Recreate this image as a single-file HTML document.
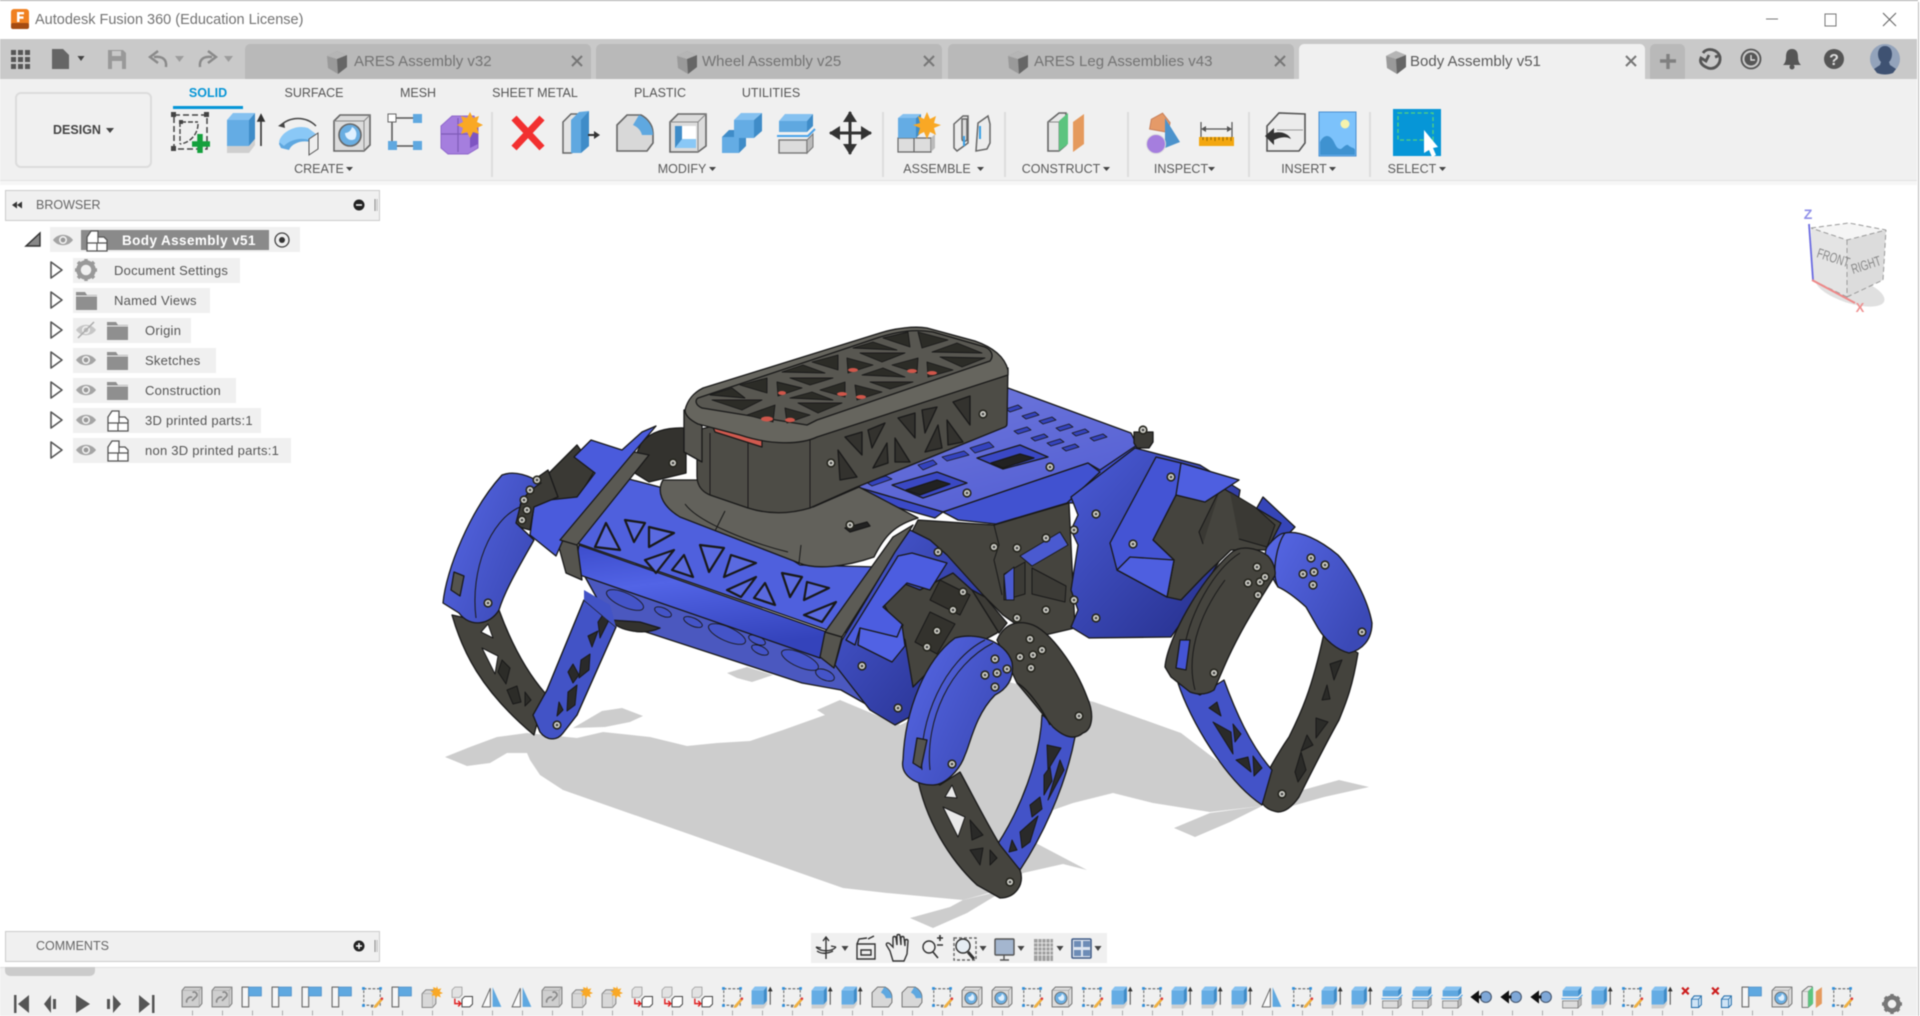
<!DOCTYPE html>
<html lang="en"><head><meta charset="utf-8"><title>Autodesk Fusion 360 (Education License)</title>
<style>
html,body{margin:0;padding:0;background:#fff;width:1920px;height:1016px;overflow:hidden}
#w{position:relative;width:1920px;height:1016px;overflow:hidden;font-family:"Liberation Sans",sans-serif;filter:blur(.45px);background:#fff}
.b,.t{position:absolute}
.t{white-space:nowrap;line-height:1;color:#5c5c5c}
.c{transform:translateX(-50%)}
svg{position:absolute;left:0;top:0}
.tab{position:absolute;top:44px;height:35px;background:#b9b9b9;border-radius:5px 5px 0 0}
.r{position:absolute;background:#f0f0f0;height:25px;left:73px}
.m{font-size:12.5px;color:#555}
.lb{font-size:12.5px;color:#5a5a5a;top:163px}
.tr{font-size:13px;color:#555;letter-spacing:.25px}
.tb{font-size:15px;color:#737373;top:54px}
</style></head><body><div id="w">
<div class="b" style="left:0;top:0;width:1918px;height:1px;background:#aaa"></div>
<div class="b" style="left:0;top:39px;width:1917px;height:40px;background:#c9c9c9"></div>
<div class="b" style="left:0;top:79px;width:1917px;height:101px;background:#f0f0f0"></div>
<div class="b" style="left:0;top:180px;width:1917px;height:5px;background:#f6f6f6;border-top:1px solid #e2e2e2;box-sizing:border-box"></div>
<div class="b" style="left:1918px;top:2px;width:1px;height:1014px;background:#bbb"></div>
<div class="tab" style="left:245px;width:346px"></div>
<div class="tab" style="left:596px;width:346px"></div>
<div class="tab" style="left:948px;width:346px"></div>
<div class="tab" style="left:1299px;width:346px;background:#f0f0f0"></div>
<div class="tab" style="left:1650px;width:35px"></div>
<div class="b" style="left:15px;top:92px;width:137px;height:76px;box-sizing:border-box;background:#f0f0f0;border:2px solid #dcdcdc;border-radius:6px"></div>
<div class="b" style="left:173px;top:106px;width:70px;height:3px;background:#0696d7"></div>
<div class="b" style="left:5px;top:190px;width:375px;height:31px;box-sizing:border-box;background:#f0f0f0;border:1px solid #ccc"></div>
<div class="r" style="left:50px;top:227px;width:250px"></div>
<div class="b" style="left:81px;top:230px;width:188px;height:20px;background:#8a8a8a"></div>
<div class="r" style="top:258px;width:167px"></div>
<div class="r" style="top:288px;width:137px"></div>
<div class="r" style="top:318px;width:118px"></div>
<div class="r" style="top:348px;width:143px"></div>
<div class="r" style="top:378px;width:163px"></div>
<div class="r" style="top:408px;width:188px"></div>
<div class="r" style="top:438px;width:218px"></div>
<div class="b" style="left:5px;top:931px;width:375px;height:31px;box-sizing:border-box;background:#f0f0f0;border:1px solid #ccc"></div>
<div class="b" style="left:811px;top:933px;width:296px;height:30px;background:#f0f0f0"></div>
<div class="b" style="left:0;top:967px;width:1917px;height:49px;background:#f0f0f0;border-top:1px solid #e0e0e0;box-sizing:border-box"></div>
<div class="b" style="left:5px;top:967px;width:90px;height:9px;background:#cbcbcb;border-radius:0 0 5px 5px"></div>
<div class="b" style="left:1393px;top:109px;width:48px;height:47px;background:#0696d7"></div>

<svg width="1920" height="1016" viewBox="0 0 1920 1016">
<defs>
<linearGradient id="pgr" x1="0" y1="0" x2="1" y2="1"><stop offset="0" stop-color="#4b5cd8"/><stop offset="1" stop-color="#232c86"/></linearGradient>
<linearGradient id="tu" x1="0" y1="0" x2=".25" y2="1"><stop offset="0" stop-color="#3c4ccb"/><stop offset=".4" stop-color="#5264e6"/><stop offset="1" stop-color="#3443bb"/></linearGradient>
<linearGradient id="dk" x1="0" y1="0" x2=".6" y2="1"><stop offset="0" stop-color="#7079dc"/><stop offset="1" stop-color="#5560d4"/></linearGradient>
<linearGradient id="bc" x1="0" y1="0" x2="1" y2=".6"><stop offset="0" stop-color="#5768e6"/><stop offset="1" stop-color="#3b49b6"/></linearGradient>
<g id="s"><circle r="4.6" fill="#26261f"/><circle r="3" fill="#cfcfc8"/><circle r="1.3" fill="#444"/></g>
<g id="eye"><path d="M-10 0C-5-7 5-7 10 0 5 7-5 7-10 0z" fill="#a4a4a4"/><circle r="4" fill="#f0f0f0"/><circle r="2.4" fill="#999"/></g>
<g id="fo"><path d="M0 1h9l2 3h10v15H0z" fill="#8f8f8f"/><path d="M0 5h21" stroke="#f0f0f0" stroke-width="1"/></g>
<g id="co"><path d="M1 8l4-6h7v6h6l3 3v11H1z" fill="#fff" stroke="#555" stroke-width="1.3"/><path d="M1 14h20M11 14v8M12 8v6" stroke="#555" stroke-width="1.2" fill="none"/></g>
<path id="tri" d="M0-8L11 0 0 8z" fill="#fff" stroke="#555" stroke-width="1.6" stroke-linejoin="round"/>
<path id="car" d="M-3.5-2h7L0 3z" fill="#444"/>

<g id="ex"><rect x="1" y="8" width="22" height="26" fill="#64ace4"/><polygon points="1,8 7,1 29,1 23,8" fill="#85c1f0"/><polygon points="23,8 29,1 29,27 23,34" fill="#3f8cc8"/><polygon points="1,34 23,34 29,27 29,33 23,41 1,41" fill="#cfcfcf"/><path d="M35 34V5M32 9l3-6 3 6z" stroke="#333" stroke-width="1.6" fill="#333"/></g>
<g id="fi"><path d="M2 38V12L12 2h14c6 3 12 10 12 18v10l-6 8z" fill="#d8d8d8" stroke="#666" stroke-width="1.6"/><path d="M24 2c8 3 14 11 14 20H27c-1-4-4-8-9-10z" fill="#5fa8e0"/></g>
<g id="ho"><path d="M2 8l6-6h30v30l-6 6H2z" fill="#dcdcdc" stroke="#666" stroke-width="1.6"/><path d="M2 8h30v30M32 8l6-6" fill="none" stroke="#888"/><circle cx="18" cy="22" r="11" fill="#6aaee2" stroke="#666" stroke-width="1.6"/><path d="M13 20c3 0 6-2 7-6 4 2 6 7 3 12-5 3-10-1-10-6z" fill="#dff0ff"/></g>
<g id="fl"><rect x="2" y="2" width="12" height="36" fill="#f6f6f6" stroke="#666" stroke-width="2"/><rect x="14" y="2" width="23" height="16" fill="#5fa8e0" stroke="#4a8ec8" stroke-width="1.5"/></g>
<g id="sk"><rect x="5" y="5" width="30" height="30" fill="none" stroke="#555" stroke-width="1.6" stroke-dasharray="5 3"/><rect x="2" y="2" width="5" height="5" fill="#2f8fdc"/><rect x="33" y="2" width="5" height="5" fill="#2f8fdc"/><rect x="2" y="33" width="5" height="5" fill="#2f8fdc"/><rect x="18" y="35" width="4" height="4" fill="#777"/><path d="M24 36l12-14 4 3-12 14-5 1z" fill="#f0b040"/><circle cx="38" cy="23" r="2.4" fill="#e03a3a"/></g>
<g id="ln"><path d="M2 8l5-6h31v30l-5 6H2z" fill="#cfcfcf" stroke="#777" stroke-width="1.8"/><path d="M2 8h31v30M33 8l5-6" fill="none" stroke="#999"/><path d="M11 30c-4-4 6-13 9-9M21 12c4-4 11 3 7 7l-8 8" fill="none" stroke="#888" stroke-width="3"/></g>
<g id="ns"><path d="M2 14l7-7h18v25l-6 7H2z" fill="#d8d8d8" stroke="#777" stroke-width="1.6"/><path d="M2 14h19v25" fill="none" stroke="#aaa"/><path d="M29 0l2 6 6-2-3 6 6 3-6 2 2 6-6-3-3 5-2-6-6 1 3-5-5-4 6-1-1-6 6 2z" fill="#f9a825"/></g>
<g id="cp"><path d="M2 7l5-5h13v14l-5 5H2z" fill="#e2e2e2" stroke="#999" stroke-width="1.4"/><path d="M20 24l5-5h14v14l-5 5H20z" fill="#fff" stroke="#444" stroke-width="1.8"/><path d="M7 23v9h10M13 27l5 5-5 5" fill="none" stroke="#e02020" stroke-width="2.6"/></g>
<g id="mi"><path d="M17 4L2 38h15z" fill="#fafafa" stroke="#666" stroke-width="1.8"/><path d="M21 2l16 36H21z" fill="#5fa8e0"/></g>
<g id="of"><polygon points="3,8 9,1 37,1 31,8" fill="#85c1f0"/><rect x="3" y="8" width="28" height="11" fill="#5fa8e0"/><polygon points="31,8 37,1 37,13 31,19" fill="#3f8cc8"/><path d="M1 23h31l7-7" fill="none" stroke="#4aa3ea" stroke-width="2"/><rect x="3" y="27" width="28" height="13" fill="#dcdcdc" stroke="#777" stroke-width="1.4"/><path d="M31 27l6-6v13l-6 6z" fill="#bbb" stroke="#777"/></g>
<g id="jn"><circle cx="27" cy="20" r="10" fill="#7fa8d8" stroke="#44566e" stroke-width="2"/><path d="M19 20H9M12 13l-9 7 9 7z" stroke="#111" stroke-width="5" fill="#111"/></g>
<g id="rm"><path d="M2 3l12 12M14 3L2 15" stroke="#cc1f1f" stroke-width="4"/><path d="M19 24l5-6h13v16l-5 5H19z" fill="#cfe4f6" stroke="#1f6aa8" stroke-width="1.8"/><path d="M19 24h13v15M32 24l5-6" fill="none" stroke="#1f6aa8" stroke-width="1.4"/></g>
<g id="cpl"><path d="M2 38V10L13 1h7v32l-7 6H2z" fill="#e8e8e8" stroke="#666" stroke-width="1.6"/><path d="M2 10h11v29" fill="none" stroke="#888"/><path d="M13 9L22 1v31l-9 7z" fill="#5cc47f"/><path d="M27 10l11-8v30l-11 8z" fill="#e59a5d"/></g>
<g id="tln"><use href="#ln" transform="scale(.55)"/></g><g id="tfl"><use href="#fl" transform="scale(.55)"/></g><g id="tsk"><use href="#sk" transform="scale(.55)"/></g><g id="tns"><use href="#ns" transform="scale(.55)"/></g><g id="tcp"><use href="#cp" transform="scale(.55)"/></g><g id="tmi"><use href="#mi" transform="scale(.55)"/></g><g id="tex"><use href="#ex" transform="scale(.55)"/></g><g id="tfi"><use href="#fi" transform="scale(.55)"/></g><g id="tho"><use href="#ho" transform="scale(.55)"/></g><g id="tof"><use href="#of" transform="scale(.55)"/></g><g id="tjn"><use href="#jn" transform="scale(.55)"/></g><g id="trm"><use href="#rm" transform="scale(.55)"/></g><g id="tcpl"><use href="#cpl" transform="scale(.55)"/></g>
<g id="cube"><polygon points="0,6 10,1 20,5 20,17 11,24 1,18" fill="#9a9a9a"/><polygon points="10,9 20,5 20,17 11,24" fill="#666"/><polygon points="0,6 10,1 20,5 10,9" fill="#b5b5b5"/></g>
<g id="x"><path d="M-5-5L5 5M5-5L-5 5" stroke="#777" stroke-width="2"/></g>
</defs>

<!-- title / tab bar -->
<rect x="11" y="9" width="18" height="20" rx="3" fill="#f08020"/><rect x="11" y="23" width="18" height="6" rx="2" fill="#a54c12"/><path d="M17 12h7v2.4h-4.5v2h4v2.300h-4V22H17z" fill="#fff"/>
<path d="M1766 19h12" stroke="#777"/><rect x="1825" y="14" width="11" height="12" fill="none" stroke="#777"/><path d="M1883 13l13 13M1896 13l-13 13" stroke="#666" stroke-width="1.100"/>
<g fill="#555"><rect x="11" y="50" width="5" height="5"/><rect x="18" y="50" width="5" height="5"/><rect x="25" y="50" width="5" height="5"/><rect x="11" y="57" width="5" height="5"/><rect x="18" y="57" width="5" height="5"/><rect x="25" y="57" width="5" height="5"/><rect x="11" y="64" width="5" height="5"/><rect x="18" y="64" width="5" height="5"/><rect x="25" y="64" width="5" height="5"/></g>
<path d="M52 49h11l6 6v14H52z" fill="#666"/><use href="#car" x="81" y="58" fill="#555"/>
<path d="M108 50h15l3 3v16h-18z" fill="#999"/><rect x="112" y="51" width="9" height="5" fill="#c9c9c9"/><rect x="112" y="61" width="10" height="8" fill="#c9c9c9"/>
<path d="M166 67c1-8-4-11-12-10M158 51l-8 6 8 6" fill="none" stroke="#8a8a8a" stroke-width="2.400"/><path d="M175 56h9l-4.500 6z" fill="#9c9c9c"/>
<path d="M200 67c-1-8 4-11 12-10M208 51l8 6-8 6" fill="none" stroke="#8a8a8a" stroke-width="2.400"/><path d="M224 56h9l-4.500 6z" fill="#9c9c9c"/>
<use href="#cube" x="327" y="50"/><use href="#x" x="577" y="61"/>
<use href="#cube" x="677" y="50"/><use href="#x" x="929" y="61"/>
<use href="#cube" x="1008" y="50"/><use href="#x" x="1280" y="61"/>
<use href="#cube" x="1386" y="50"/><use href="#x" x="1631" y="61"/>
<path d="M1668 54v15M1660 61h16" stroke="#808080" stroke-width="3.400"/>
<path d="M1703 53c4-6 15-4 17 4 1 8-6 13-12 11-5-2-9-5-7-10l5 3 3-6M1715 57l3-1" fill="none" stroke="#555" stroke-width="2.800"/>
<circle cx="1751" cy="59" r="9.500" fill="none" stroke="#555" stroke-width="1.800"/><circle cx="1751" cy="59" r="6.500" fill="#555"/><path d="M1751 55v5h4" stroke="#ddd" fill="none" stroke-width="1.400"/>
<path d="M1792 49c5 0 6 4 6 8 0 4 1 6 3 8h-18c2-2 3-4 3-8 0-4 1-8 6-8z" fill="#555"/><circle cx="1792" cy="67" r="2.500" fill="#555"/>
<circle cx="1834" cy="59" r="10" fill="#555"/><text x="1834" y="65" text-anchor="middle" font-family="Liberation Sans" font-weight="bold" font-size="16" fill="#ddd">?</text>
<circle cx="1885" cy="59" r="15" fill="#93a3bb"/><path d="M1885 46c5 0 7 4 7 8 0 3-1 6-3 8l1 3 6 4-3 4c-5 2-11 2-16 0l-3-4 6-4 1-3c-2-2-3-5-3-8 0-4 2-8 7-8z" fill="#3f5272"/>

<!-- design caret etc -->
<path d="M106 128h8l-4 5z" fill="#444"/>
<path d="M492 112v65M883 112v65M1005 112v65M1128 112v65M1249 112v65M1370 112v65" stroke="#ddd" stroke-width="2"/>
<g fill="#444"><path d="M346 167h7l-3.500 4z"/><path d="M709 167h7l-3.500 4z"/><path d="M977 167h7l-3.500 4z"/><path d="M1103 167h7l-3.500 4z"/><path d="M1208 167h7l-3.500 4z"/><path d="M1329 167h7l-3.500 4z"/><path d="M1439 167h7l-3.500 4z"/></g>

<!-- toolbar icons -->
<g transform="translate(171,112)"><rect x="3" y="3" width="33" height="34" fill="none" stroke="#444" stroke-width="1.500" stroke-dasharray="6 3"/><path d="M10 10h17M9 10v22M27 12c0 10-8 19-18 20" fill="none" stroke="#444" stroke-width="1.400" stroke-dasharray="5 2"/><g fill="#444"><rect y="0" width="5" height="5"/><rect x="33" width="5" height="5"/><rect y="34" width="5" height="5"/><rect x="8" y="8" width="4" height="4"/></g><path d="M29 22v19M21 32h18" stroke="#14a03c" stroke-width="5.500"/></g>
<use href="#ex" transform="translate(226,112)"/>
<g transform="translate(278,112)"><path d="M2 14c10-10 26-10 36 0" fill="none" stroke="#444" stroke-width="1.500"/><path d="M0 14l6-4 1 6z" fill="#444"/><path d="M1 32C3 22 18 15 30 18l2 12c-8-2-18 1-21 8L3 36z" fill="#5fa8e0"/><path d="M1 30C3 20 18 12 30 16l8 6-7 6c-8-3-20 0-25 6z" fill="#8ac8f6"/><path d="M31 27l9-6v16l-9 6z" fill="#eee" stroke="#555"/></g>
<use href="#ho" transform="translate(332,113)"/>
<g transform="translate(386,112)"><path d="M8 6h20M6 10v20M10 34h20" stroke="#555" stroke-width="1.500"/><rect x="2" y="2" width="8" height="8" fill="#fff" stroke="#666"/><rect x="27" y="2" width="9" height="9" fill="#5fa8e0"/><rect x="2" y="29" width="9" height="9" fill="#5fa8e0"/><rect x="27" y="29" width="9" height="9" fill="#5fa8e0"/></g>
<g transform="translate(440,112)"><path d="M1 14L12 4h22l4 10v22l-10 6H8l-7-6z" fill="#a57ede" stroke="#9068cc"/><path d="M1 22h36M18 6v34" stroke="#7f5bb8" stroke-width="1.200"/><path d="M30 36V14l8-2v20z" fill="#7e55c2"/><path d="M30 0l3 6 6-2-2 6 6 3-6 3 2 6-6-2-3 6-3-6-6 2 2-6-6-3 6-3-2-6 6 2z" fill="#f9a825"/></g>
<path d="M514 118l28 30M542 118l-28 30" stroke="#f23030" stroke-width="7"/>
<g transform="translate(562,112)"><path d="M1 10l8-8h8v36l-8 3H1z" fill="#e4e4e4" stroke="#666" stroke-width="1.500"/><polygon points="9,8 17,0 27,-1 27,34 19,41 9,41" fill="#5fa8e0"/><polygon points="19,8 27,-1 27,34 19,41" fill="#3f8cc8"/><path d="M26 23h8" stroke="#333" stroke-width="2"/><path d="M32 19l6 4-6 4z" fill="#333"/></g>
<use href="#fi" transform="translate(615,113)"/>
<g transform="translate(668,112)"><path d="M2 10l8-8h28v32l-8 6H2z" fill="#dcdcdc" stroke="#666" stroke-width="1.600"/><path d="M2 10h28v30M30 10l8-8" fill="none" stroke="#888"/><path d="M7 14h21v22H7z" fill="#3f8cc8"/><path d="M14 14h14v14H14z" fill="#fff"/><path d="M14 27h14v9H7z" fill="#8ac8f6"/></g>
<polygon points="722,137 729,130 746,130 746,146 739,153 722,153" fill="#3f8cc8"/><rect x="722" y="137" width="17" height="16" fill="#64ace4"/><polygon points="734,120 741,113 762,113 754,120" fill="#85c1f0"/><rect x="734" y="120" width="20" height="18" fill="#64ace4"/><polygon points="754,120 762,113 762,131 754,138" fill="#3f8cc8"/>
<g transform="translate(776,113)"><use href="#of"/></g>
<path d="M850 112v42M830 133h41" stroke="#333" stroke-width="3"/><path d="M850 111l-7 11h14zM850 155l-7-11h14zM829 133l11-7v14zM872 133l-11-7v14z" fill="#333"/>
<g transform="translate(897,112)"><path d="M1 26h16v14H1zM17 26h17v14H17z" fill="#ddd" stroke="#666" stroke-width="1.200"/><path d="M1 6h18v20H1z" fill="#64ace4"/><path d="M19 6l5-4v19l-5 5z" fill="#3f8cc8"/><path d="M1 6l5-4h18l-5 4z" fill="#85c1f0"/><path d="M34 26l4-4v14l-4 4z" fill="#bbb"/><path d="M30 0l3 7 6-3-2 7 7 2-7 3 2 7-6-3-3 7-3-7-6 3 2-7-7-3 7-2-2-7 6 3z" fill="#f9a825"/></g>
<g transform="translate(953,114)" fill="#ececec" stroke="#666" stroke-width="1.500"><path d="M1 10L10 2h5v27L4 37l-3-3z"/><path d="M35 2l-10 7-2 28 11-2 3-6V10z"/><path d="M9 5v20c0 3 5 3 5 0V5z" fill="#ddd"/><path d="M11 22v10M27 12v13" stroke="#39a0e6" stroke-width="2"/></g>
<g transform="translate(1046,112)"><use href="#cpl"/></g>
<g transform="translate(1141,112)"><path d="M10 9l10-8 9 8v10H10z" fill="#e59a68" stroke="#c8805a" transform="rotate(10 20 10)"/><path d="M24 6l15 24-15 6z" fill="#4c93cc"/><circle cx="15" cy="32" r="9.500" fill="#a57ede" stroke="#ddd"/></g>
<g transform="translate(1199,122)"><path d="M2 0v15M33 0v15M3 7h29" stroke="#555" stroke-width="1.200" fill="none"/><path d="M2 7l5-3v6zM33 7l-5-3v6z" fill="#555"/><rect x="0" y="15" width="35" height="9" fill="#f3a710"/><path d="M4 15v3M8 15v4M12 15v3M16 15v4M20 15v3M24 15v4M28 15v3M32 15v4" stroke="#996a00"/></g>
<g transform="translate(1265,112)"><path d="M2 14L14 1l26 1v29l-6 8H2z" fill="#ececec" stroke="#555" stroke-width="1.600"/><path d="M12 18h26" stroke="#999"/><path d="M0 24l9-8v5c6-2 14 0 17 6-5-3-11-2-17 1v5z" fill="#333"/></g>
<g transform="translate(1319,112)"><rect width="37" height="44" fill="#7cc2fb" stroke="#4a8fd0" stroke-width="1"/><path d="M1 43V30c4-8 10-8 14 0 2 4 3 7 7 7 3-2 6-6 8-3 3 2 6 2 6 4v5z" fill="#3f92d0"/><circle cx="26" cy="12" r="4.500" fill="#f6f3ad"/></g>
<rect x="1398" y="113" width="35" height="27" fill="none" stroke="#53d27f" stroke-width="1.300" stroke-dasharray="4 2.500"/><path d="M1424 130l14 17-5 1 3 7-4 2-3-7-5 3z" fill="#fff"/>

<!-- browser -->
<path d="M12 205l5-3.500v7zM17 205l5-3.500v7z" fill="#333"/><circle cx="359" cy="205" r="5.500" fill="#222"/><path d="M356 205h6" stroke="#fff" stroke-width="1.500"/><path d="M375 199v12" stroke="#888" stroke-width="1"/><path d="M377 199v12" stroke="#bbb"/>
<path d="M26 246L40 233v13z" fill="#888" stroke="#333" stroke-width="1.400"/>
<use href="#eye" x="63" y="240"/><use href="#co" transform="translate(86,229)"/>
<circle cx="282" cy="240" r="7" fill="none" stroke="#444" stroke-width="1.300"/><circle cx="282" cy="240" r="3" fill="#333"/>
<use href="#tri" x="51" y="270"/><use href="#tri" x="51" y="300"/><use href="#tri" x="51" y="330"/><use href="#tri" x="51" y="360"/><use href="#tri" x="51" y="390"/><use href="#tri" x="51" y="420"/><use href="#tri" x="51" y="450"/>
<g transform="translate(86,270)"><circle r="7.500" fill="none" stroke="#999" stroke-width="4.500"/><path d="M0-11v5M0 6v5M-11 0h5M6 0h5M-8-8l4 4M4 4l4 4M8-8l-4 4M-4 4l-4 4" stroke="#999" stroke-width="3.500"/></g>
<use href="#fo" transform="translate(76,291)"/>
<g transform="translate(86,330)"><use href="#eye" opacity=".55"/><path d="M-8 8L8-8" stroke="#aaa" stroke-width="1.400"/></g><use href="#fo" transform="translate(107,321)"/>
<use href="#eye" x="86" y="360"/><use href="#fo" transform="translate(107,351)"/>
<use href="#eye" x="86" y="390"/><use href="#fo" transform="translate(107,381)"/>
<use href="#eye" x="86" y="420"/><use href="#co" transform="translate(107,409)"/>
<use href="#eye" x="86" y="450"/><use href="#co" transform="translate(107,439)"/>
<circle cx="359" cy="946" r="5.500" fill="#222"/><path d="M356 946h6M359 943v6" stroke="#fff" stroke-width="1.500"/><path d="M375 940v12" stroke="#888"/><path d="M377 940v12" stroke="#bbb"/>

<!-- shadow -->
<g fill="#cdcdcd">
<polygon points="527,733 577,738 603,732 650,737 687,746 717,743 750,741 783,730 825,715 817,710 840,700 900,725 1000,680 1094,702 1181,733 1262,795 1262,806 1210,812 1153,803 1113,793 1073,803 1053,810 1030,840 1087,870 1063,864 1023,873 1000,890 963,900 887,893 843,888 563,790 540,775 530,760 527,753 507,753 490,763 467,766 445,757 470,747 497,737"/>
<polygon points="1174,828 1210,813 1262,806 1230,822 1195,837"/>
<polygon points="1282,800 1292,793 1339,780 1369,787 1324,797 1285,808"/>
<polygon points="573,728 602,711 622,708 643,716 630,722 605,727"/>
<polygon points="727,673 747,667 773,675 752,682 737,678"/>
<polygon points="910,918 950,907 963,900 1005,890 967,913 933,928"/>
</g>

<!-- robot -->
<g stroke="#191919" stroke-width="1.300" stroke-linejoin="round">
<!-- deck -->
<polygon points="1088,463 1135,440 1142,452 1075,503 1067,503" fill="#3f4ed0"/>
<polygon points="1008,388 1131,433 1137,445 1100,470 1088,463 943,512 857,487 900,450" fill="url(#dk)"/>
<polygon points="857,487 943,512 935,518 860,497" fill="#3b4ac8"/>
<polygon points="943,512 1088,463 1100,472 1067,503 996,524 958,520" fill="#4152d0"/>
<polygon points="892,485 937,472 967,483 923,498" fill="#3a48c4"/><polygon points="906,490 937,480 950,484 920,495" fill="#222"/>
<polygon points="977,458 1020,445 1048,457 1003,469" fill="#3a48c4"/><polygon points="991,463 1020,454 1034,458 1003,468" fill="#222"/>
<g fill="#3443bd" stroke-width=".8"><path d="M1006 409l12-4 4 3-12 4zM1022 416l13-4 4 3-13 4zM1039 421l13-4 4 3-13 4zM1056 428l13-4 4 3-13 4zM1072 433l13-4 4 3-13 4zM1090 438l13-4 4 3-13 4zM1014 431l13-4 4 3-13 4zM1031 438l13-4 4 3-13 4zM1047 443l13-4 4 3-13 4zM1062 448l13-4 4 3-13 4zM970 448l19-6 5 5-19 6zM942 457l22-6 5 4-22 6zM918 465l15-5 4 4-14 6zM866 482l20-6 6 3-20 7z"/></g>
<!-- bracket -->
<polygon points="918,520 994,525 1069,503 1075,628 1045,635 1020,627 1003,615 985,597 947,562 905,545" fill="#45443e"/>
<path d="M994 525l5 20-5 15 8 35" fill="none" stroke-width="1"/>
<polygon points="1020,556 1060,532 1068,545 1032,566" fill="#4a5ad0" stroke-width="1"/>
<path d="M1004 574l21-12v32l-21 6zM1032 568l34 18-1 16-33-8z" fill="#3c3b36" stroke-width="1"/>
<polygon points="1004,575 1014,567 1014,600 1006,600" fill="#4a5ad0" stroke-width="1"/>
<!-- right end -->
<path d="M1134 432h19v10l-4 6h-12l-3-5z" fill="#3c3b36"/>
<path d="M1071 497L1135 448 1200 465 1240 490 1235 520 1220 560 1190 610 1171 637 1089 638 1071 627 1078 610 1071 590 1078 545 1071 530 1078 515z" fill="url(#pgr)"/>
<polygon points="1263,497 1295,527 1278,545 1250,520" fill="#3545b8"/>
<polygon points="1176,495 1221,487 1281,523 1267,550 1231,550 1203,577 1181,600 1167,597 1174,560 1153,540" fill="#45443e"/>
<path d="M1221 487l-22 45 4 12M1230 492l25 15 20 18-8 22-28-8" fill="#3a3934" stroke-width="1"/>
<polygon points="1156,457 1181,463 1239,480 1205,502 1176,495 1153,540 1174,560 1167,597 1117,570 1110,543" fill="#4454d4"/>
<polygon points="1181,463 1239,480 1205,502 1176,495" fill="#4e5fe0"/>
<polygon points="1130,557 1174,560 1167,597 1117,570" fill="#4e5fe0"/>
<!-- right legs -->
<path d="M1324 633L1358 653C1352 690 1345 705 1339 720 1325 745 1310 775 1299 797 1292 807 1285 812 1278 812 1265 810 1258 802 1260 790 1262 780 1280 750 1289 737 1300 715 1312 690 1324 633z" fill="#44433d"/>
<g fill="#2b2b28" stroke-width="1"><path d="M1330 664l12-4-8 20zM1322 700l5-15 3 14zM1316 718l12 4-12 16zM1307 735l6 10-12 6zM1295 772l6-20 5 18-8 12z"/></g>
<path d="M1178 683C1190 720 1225 780 1262 805L1272 770C1250 745 1235 710 1224 680L1200 695z" fill="#4353c8"/>
<g fill="#2a2a2a" stroke-width="1"><path d="M1209 708l8-6 4 14zM1213 722l18 10 2 22zM1233 724l8 10-6 8zM1236 760l12-3 3 15zM1253 756l9 12-8 8z"/></g>
<path d="M1267 547C1272 540 1280 533 1285 533 1300 530 1320 540 1338 555 1352 570 1368 600 1372 623 1372 640 1362 650 1349 653 1337 650 1325 640 1318 628L1306 607C1295 597 1285 590 1278 587 1270 575 1262 555 1267 547z" fill="url(#bc)"/>
<path d="M1285 533c-8 10-14 40-7 54" fill="none"/>
<path d="M1165 667C1167 640 1200 580 1231 553 1240 545 1256 547 1268 556 1276 565 1276 575 1274 577 1260 600 1240 630 1224 667L1214 690C1206 695 1198 695 1190 692L1171 677z" fill="#45443e"/>
<path d="M1185 645c5-30 28-75 55-92M1195 690c-8-30 0-70 30-110" fill="none" stroke-width="1"/>
<polygon points="1180,640 1190,640 1186,670 1176,668" fill="#4454d4"/>
<!-- left blue link -->
<path d="M547 690L584 600 616 627 577 715 563 733C557 741 547 741 540 732L533 715z" fill="#4253c6"/>
<!-- body lower -->
<polygon points="584,575 830,655 899,723 880,712 841,690 802,683 649,633 609,620" fill="#4b58bf"/>
<g fill="#4454c8" stroke-width=".9"><ellipse cx="625" cy="600" rx="20" ry="7" transform="rotate(24 625 600)"/><ellipse cx="663" cy="612" rx="9" ry="4" transform="rotate(24 663 612)"/><ellipse cx="693" cy="622" rx="10" ry="4" transform="rotate(24 693 622)"/><ellipse cx="727" cy="634" rx="20" ry="7" transform="rotate(24 727 634)"/><ellipse cx="757" cy="640" rx="9" ry="4" transform="rotate(24 757 640)"/><ellipse cx="760" cy="650" rx="9" ry="4" transform="rotate(24 760 650)"/><ellipse cx="800" cy="660" rx="20" ry="7" transform="rotate(24 800 660)"/><ellipse cx="825" cy="675" rx="10" ry="5" transform="rotate(24 825 675)"/></g>
<path d="M610 620c10 12 35 15 50 8l-20-6z" fill="#33322e"/>
<!-- body upper -->
<polygon points="577,543 625,478 690,495 800,565 880,567 850,633 827,630" fill="#4f60dd"/>
<polygon points="579,545 827,632 820,658 574,573" fill="url(#tu)"/>
<g fill="#5a6ae0" stroke-width="2.200"><path d="M606 523L620 550 595 547zM625 520L645 523 634 542zM649 527L674 533 649 547zM645 560L674 550 656 573zM684 555L693 577 672 570zM700 545L724 548 709 572zM731 555L756 563 724 577zM727 590L756 577 741 597zM765 583L775 605 754 598zM782 573L802 577 790 597zM807 582L829 588 804 600zM804 615L836 602 822 622z"/></g>
<!-- straps -->
<polygon points="557,540 577,543 582,580 566,573" fill="#55544e"/>
<path d="M641 443C650 432 666 427 686 428L686 473 649 482 630 470z" fill="#33322e"/>
<polygon points="825,632 842,637 834,668 820,657" fill="#55544e"/>
<!-- base -->
<path d="M663 480C657 490 660 505 680 517L799 563C815 570 845 567 874 557 885 535 895 525 918 518L859 487 813 507 699 480z" fill="#62615b"/>
<path d="M788 552c-40-10-90-30-103-48M725 511l-10 20M799 563l2-18" fill="none" stroke-width="1"/>
<path d="M845 528l22-6 3 4-20 6z" fill="#222"/>
<polygon points="893,537 913,525 842,637 825,632" fill="#5c5b55"/>
<!-- box -->
<path d="M697 430L697 476C697 488 705 493 710 495L748 508C770 515 790 514 810 508L857 487 1005 427C1007 426 1007 425 1007 422L1008,368 900 380z" fill="#4d4c46"/>
<path d="M710 433v62M748 440v68M810 440v68" fill="none" stroke-width="1"/>
<path d="M684 410v42l18 10v-36z" fill="#55544e"/>
<polygon points="712,425 762,440 762,447 715,432" fill="#d05a4f"/>
<path d="M685 410C688 398 695 392 703 388L880 333C895 328 915 326 927 328L975 341C995 348 1005 358 1008 370L1008 375 817 437C800 445 770 445 740 435L698 424C690 420 685 415 685 410z" fill="#66655e"/>
<path d="M698 398L880 337C900 331 915 329 933 332L985 347C992 350 994 356 990 361L817 420 807 425 702 408C695 405 695 400 698 398z" fill="#585751"/>
<g fill="#2c2c27" stroke-width=".9"><path d="M710 395L732 388 745 398zM712 400L762 400 742 410zM740 385L767 378 767 393zM747 415L775 405 773 422zM785 408L810 415 787 423zM777 382L802 388 778 396zM790 398L812 392 833 400zM798 403L842 403 818 413zM782 372L803 365 825 373zM790 378L833 378 810 385zM820 390L845 382 845 397zM855 385L882 392 857 400zM812 362L838 355 838 370zM847 358L873 365 848 373zM862 375L883 368 905 377zM870 382L913 382 890 389zM892 365L918 358 917 373zM927 362L953 370 928 377zM853 348L873 342 897 350zM860 353L905 353 882 362zM883 338L908 332 910 347zM918 332L948 340 922 348zM932 352L957 343 982 353zM940 357L985 358 962 367z"/></g>
<g fill="#d0564a" stroke="none"><ellipse cx="767" cy="419" rx="6" ry="2.500"/><ellipse cx="790" cy="420" rx="5" ry="2.200"/><ellipse cx="782" cy="393" rx="4" ry="2"/><ellipse cx="842" cy="394" rx="5" ry="2"/><ellipse cx="861" cy="397" rx="5" ry="2"/><ellipse cx="853" cy="370" rx="5" ry="2"/><ellipse cx="912" cy="371" rx="5" ry="2"/><ellipse cx="932" cy="373" rx="5" ry="2"/></g>
<g fill="#33322e" stroke-width="1.300"><path d="M838 450L857 477 840 480zM845 437L862 432 862 455zM868 430L885 423 872 448zM873 468L887 443 888 463zM895 438L910 462 895 462zM898 418L915 413 915 438zM922 410L937 407 925 433zM925 452L938 425 942 448zM947 420L963 442 948 445zM953 402L970 396 970 425z"/></g>
<!-- left end -->
<path d="M545 477L577 445 595 470 577 500 545 507z" fill="#3a3934"/>
<path d="M534 505L549 500 577 497 595 473 574 457 591 440 622 450 642 432 656 426 634 452 563 540 556 556 530 535z" fill="#4a5bdc"/>
<polygon points="634,452 649,455 577,545 560,540" fill="#5a5953"/>
<polygon points="528,484 548,470 558,497 534,507 530,530 515,526 518,512" fill="#3c3b36"/>
<!-- left legs -->
<path d="M452 615C462 650 480 690 534 735L545 693C525 670 510 640 499 610L475 620z" fill="#45443e"/>
<g fill="#fff" stroke-width="1"><path d="M481 632l7-8 5 14zM482 648l16 8-3 18z"/></g><g fill="#2c2c28" stroke-width="1"><path d="M502 660l8 8-4 16-8-12zM507 690l10-4 4 16-8 2zM525 692l6 8-6 6z"/></g>
<path d="M547 690L584 600 616 627 577 715 563 733C557 741 547 741 540 732L533 715z" fill="#4253c6"/>
<g fill="#2a2a2a" stroke-width="1"><path d="M598 622l8-12 2 12-8 16zM588 636l10-5-6 16zM581 660l9-6-1 16-10 8zM568 672l5-8 6 11-6 8zM568 692l9-7-2 20-8 6zM559 702l4 8-6 6z"/></g>
<polygon points="584,590 610,605 616,627 584,600" fill="#4253c6" stroke="none"/>
<path d="M443 603C446 570 470 510 502 475 515 470 530 476 541 483 530 490 520 500 520 507L516 523 534 540C520 565 505 590 499 610 490 625 470 628 459 613z" fill="url(#bc)"/>
<path d="M476 618C470 570 490 520 520 507" fill="none" stroke-width="1"/>
<path d="M454 572l10 4-4 20-9-6z" fill="#55544e"/>
<!-- front end -->
<polygon points="842,640 895,552 910,530 930,540 947,555 985,597 960,640 925,690 917,713 895,725 870,710 835,665" fill="url(#pgr)"/>
<polygon points="883,603 900,582 920,590 953,573 983,600 1005,622 997,633 975,645 933,667 913,687 905,640" fill="#45443e"/>
<g fill="#33322d" stroke-width="1"><path d="M940 580l30 15-10 20-30-15zM930 612l25 12-18 30-22-12z"/></g>
<polygon points="846,640 898,556 912,553 947,563 930,590 907,583 883,607 903,625 895,642 860,628 855,645" fill="#4c5de0"/>
<polygon points="860,628 897,637 902,625 905,646 892,662 858,645" fill="#5162e4"/>
<path d="M972 590l13 7 22 26-8 10z" fill="#3c3b36"/>
<!-- front legs -->
<path d="M1042 715L1075 737C1065 790 1040 840 1020 870L997 845C1020 810 1040 760 1042 715z" fill="#4353c8"/>
<g fill="#2a2a2a" stroke-width="1"><path d="M1047 745l14 3-13 22zM1044 775l6-8 2 14-8 14zM1060 760l4 10-16 30zM1030 805l10-8 2 12-10 8zM1020 832l18-16-8 26-8 6zM1012 840l5 10-8 2z"/></g>
<path d="M917 775C925 820 950 860 977 885L1000 898C1015 898 1025 885 1020 870L1000 845C985 820 970 790 960 772L940 785z" fill="#45443e"/>
<g fill="#e8e8e8" stroke-width="1"><path d="M945 797L952 785 957 798zM943 807L965 817 958 837z"/></g><g fill="#2a2a28" stroke-width="1"><path d="M970 820L983 835 972 840zM970 850L983 848 980 865zM990 850L997 858 990 865z"/></g>
<path d="M997 640C1005 622 1020 620 1033 625 1050 632 1075 665 1087 697 1095 715 1092 730 1083 733 1075 740 1065 738 1053 727L1037 707 1017 683z" fill="#45443e"/>
<path d="M1017 683c10 5 25 25 33 42" fill="none"/>
<path d="M903 760C905 710 925 660 955 638 975 632 1005 640 1012 662 1015 680 1005 690 995 695 975 715 970 745 965 755 960 770 945 785 933 785 915 785 900 775 903 760z" fill="url(#bc)"/>
<path d="M930 770C925 720 950 665 993 643M922 770C918 720 945 660 985 640" fill="none" stroke-width="1"/>
<path d="M917 738l10 2-6 28-8-5z" fill="#55544e"/>
</g>
<!-- screws -->
<g><use href="#s" x="1143" y="430"/><use href="#s" x="967" y="493"/><use href="#s" x="1050" y="467"/><use href="#s" x="850" y="525"/><use href="#s" x="673" y="463"/><use href="#s" x="831" y="463"/><use href="#s" x="983" y="414"/>
<use href="#s" x="994" y="547"/><use href="#s" x="1017" y="548"/><use href="#s" x="1046" y="538"/><use href="#s" x="1074" y="530"/><use href="#s" x="1096" y="514"/><use href="#s" x="1171" y="477"/><use href="#s" x="1133" y="544"/><use href="#s" x="1074" y="600"/><use href="#s" x="1046" y="610"/><use href="#s" x="1096" y="618"/><use href="#s" x="938" y="552"/><use href="#s" x="1017" y="618"/>
<use href="#s" x="862" y="666"/><use href="#s" x="898" y="708"/><use href="#s" x="963" y="592"/><use href="#s" x="953" y="610"/><use href="#s" x="937" y="631"/><use href="#s" x="927" y="647"/>
<use href="#s" x="997" y="673"/><use href="#s" x="995" y="659"/><use href="#s" x="1007" y="669"/><use href="#s" x="985" y="675"/><use href="#s" x="995" y="687"/><use href="#s" x="952" y="764"/>
<use href="#s" x="1033" y="655"/><use href="#s" x="1030" y="639"/><use href="#s" x="1042" y="650"/><use href="#s" x="1020" y="657"/><use href="#s" x="1031" y="668"/><use href="#s" x="1079" y="716"/><use href="#s" x="1010" y="882"/>
<use href="#s" x="1260" y="582"/><use href="#s" x="1257" y="567"/><use href="#s" x="1265" y="577"/><use href="#s" x="1248" y="583"/><use href="#s" x="1258" y="595"/><use href="#s" x="1214" y="673"/>
<use href="#s" x="1314" y="572"/><use href="#s" x="1311" y="558"/><use href="#s" x="1325" y="565"/><use href="#s" x="1303" y="574"/><use href="#s" x="1313" y="585"/><use href="#s" x="1362" y="632"/><use href="#s" x="1282" y="794"/>
<use href="#s" x="488" y="603"/><use href="#s" x="557" y="725"/><use href="#s" x="527" y="510"/><use href="#s" x="524" y="500"/><use href="#s" x="530" y="490"/><use href="#s" x="537" y="480"/><use href="#s" x="522" y="520"/></g>

<!-- viewcube -->
<ellipse cx="1850" cy="290" rx="36" ry="13" fill="#bbb" opacity=".45" transform="rotate(18 1850 290)"/>
<polygon points="1811,228 1849,223 1886,230 1847,240" fill="#f5f5f5"/><polygon points="1811,228 1847,240 1847,297 1812,280" fill="#e4e4e4"/><polygon points="1847,240 1886,230 1883,280 1847,297" fill="#dcdcdc"/>
<path d="M1811 228L1849 223 1886 230 1847 240zM1847 240v57M1847 297l-35-17M1847 297l36-17 3-50" fill="none" stroke="#999" stroke-width="1" stroke-dasharray="5 3"/>
<path d="M1809 224l4 56" stroke="#6a6ae0" stroke-width="1.800"/><path d="M1812 280l43 23" stroke="#ee8888" stroke-width="2"/>
<text x="1808" y="219" font-family="Liberation Sans" font-size="14" font-weight="bold" fill="#8f8fe8" text-anchor="middle">Z</text>
<text x="1860" y="312" font-family="Liberation Sans" font-size="13" font-weight="bold" fill="#ee9090" text-anchor="middle">X</text>
<text font-family="Liberation Sans" font-size="11.500" fill="#888" transform="translate(1816,257) rotate(18) scale(.85,1.200)">FRONT</text>
<text font-family="Liberation Sans" font-size="11.500" fill="#888" transform="translate(1853,274) rotate(-18) scale(.85,1.200)">RIGHT</text>

<!-- nav bar -->
<g fill="none" stroke="#333" stroke-width="1.400">
<path d="M826 937v22M823 941l3-4 3 4M816 947c4 5 16 5 20 0M833 951c-6 3-12 3-16 0M836 947l-5-1M816 947l5 1"/>
<path d="M857 944h18v15h-18zM861 950h10v5h-10zM857 944l2-5 8-1M868 939l6-3"/>
<path d="M890 951l-3-5c-2-3 1-4 3-2l3 3v-9c0-2 3-2 3 0l1 7v-9c0-2 3-2 3 0l1 9v-7c0-2 3-2 3 0l1 8v-5c0-2 3-2 3 0l-1 13-3 7h-11z"/>
<circle cx="929" cy="947" r="6"/><path d="M933 952l5 6M937 938h6M940 935v6M937 945h6" stroke-width="1.600"/>
<rect x="954" y="938" width="22" height="22" stroke-dasharray="3 2" stroke="#666"/><circle cx="963" cy="946" r="7" fill="#e6edf3"/><path d="M968 952l6 7" stroke-width="3"/>
<rect x="995" y="939" width="19" height="16" rx="1" fill="#a4b6cf" stroke="#555"/><path d="M1000 960h9M1004 955v5" stroke="#555"/>
</g>
<rect x="1034" y="939" width="19" height="22" fill="#a0a0a0"/><path d="M1034 943h19M1034 947h19M1034 951h19M1034 955h19M1038 939v22M1042 939v22M1046 939v22M1050 939v22" stroke="#f0f0f0" stroke-width=".8"/>
<rect x="1072" y="939" width="19" height="19" rx="1" fill="#dce4ef" stroke="#3f5a86" stroke-width="1.500"/><g fill="#6d8cb6"><rect x="1074" y="941" width="7" height="6"/><rect x="1083" y="941" width="7" height="6"/><rect x="1074" y="950" width="7" height="6"/><rect x="1083" y="950" width="7" height="6"/></g>
<use href="#car" x="845" y="948"/><use href="#car" x="983" y="948"/><use href="#car" x="1021" y="948"/><use href="#car" x="1060" y="948"/><use href="#car" x="1098" y="948"/>

<!-- playback -->
<g fill="#555"><rect x="14" y="995" width="2.500" height="18"/><path d="M29 995v18L18 1004z"/><path d="M51 995v18L44 1004zM53 999h3v10h-3z"/><path d="M76 995l14 9-14 9z"/><path d="M113 995l8 9-8 9zM107 999h3v10h-3z"/><path d="M139 995v18l11-9z"/><rect x="152" y="995" width="2.500" height="18"/></g>
<line x1="192" x2="1843" y1="1013" y2="1013" stroke="#aaa" stroke-width="5" stroke-dasharray="1 29"/>
<g transform="translate(0,986)">
<use href="#tln" x="181"/><use href="#tln" x="211"/><use href="#tfl" x="241"/><use href="#tfl" x="271"/><use href="#tfl" x="301"/><use href="#tfl" x="331"/><use href="#tsk" x="361"/><use href="#tfl" x="391"/><use href="#tns" x="421"/><use href="#tcp" x="451"/><use href="#tmi" x="481"/><use href="#tmi" x="511"/><use href="#tln" x="541"/><use href="#tns" x="571"/><use href="#tns" x="601"/><use href="#tcp" x="631"/><use href="#tcp" x="661"/><use href="#tcp" x="691"/><use href="#tsk" x="721"/><use href="#tex" x="751"/><use href="#tsk" x="781"/><use href="#tex" x="811"/><use href="#tex" x="841"/><use href="#tfi" x="871"/><use href="#tfi" x="901"/><use href="#tsk" x="931"/><use href="#tho" x="961"/><use href="#tho" x="991"/><use href="#tsk" x="1021"/><use href="#tho" x="1051"/><use href="#tsk" x="1081"/><use href="#tex" x="1111"/><use href="#tsk" x="1141"/><use href="#tex" x="1171"/><use href="#tex" x="1201"/><use href="#tex" x="1231"/><use href="#tmi" x="1261"/><use href="#tsk" x="1291"/><use href="#tex" x="1321"/><use href="#tex" x="1351"/><use href="#tof" x="1381"/><use href="#tof" x="1411"/><use href="#tof" x="1441"/><use href="#tjn" x="1471"/><use href="#tjn" x="1501"/><use href="#tjn" x="1531"/><use href="#tof" x="1561"/><use href="#tex" x="1591"/><use href="#tsk" x="1621"/><use href="#tex" x="1651"/><use href="#trm" x="1681"/><use href="#trm" x="1711"/><use href="#tfl" x="1741"/><use href="#tho" x="1771"/><use href="#tcpl" x="1801"/><use href="#tsk" x="1831"/>
</g>
<g transform="translate(1892,1004)"><circle r="6.500" fill="none" stroke="#777" stroke-width="4.500"/><path d="M0-10v5M0 5v5M-10 0h5M5 0h5M-7-7l4 4M3 3l4 4M7-7l-4 4M-3 3l-4 4" stroke="#777" stroke-width="3.500"/></g>
</svg>

<div class="t" style="left:35px;top:13px;font-size:14.5px;color:#737373">Autodesk Fusion 360 (Education License)</div>
<div class="t tb" style="left:354px">ARES Assembly v32</div>
<div class="t tb" style="left:702px">Wheel Assembly v25</div>
<div class="t tb" style="left:1034px">ARES Leg Assemblies v43</div>
<div class="t tb" style="left:1410px;color:#5a5a5a">Body Assembly v51</div>
<div class="t c" style="left:77px;top:124px;font-size:12.5px;font-weight:bold;color:#444">DESIGN</div>
<div class="t m c" style="left:208px;top:87px;color:#0696d7;font-weight:bold">SOLID</div>
<div class="t m c" style="left:314px;top:87px">SURFACE</div>
<div class="t m c" style="left:418px;top:87px">MESH</div>
<div class="t m c" style="left:535px;top:87px">SHEET METAL</div>
<div class="t m c" style="left:660px;top:87px">PLASTIC</div>
<div class="t m c" style="left:771px;top:87px">UTILITIES</div>
<div class="t lb c" style="left:319px">CREATE</div>
<div class="t lb c" style="left:682px">MODIFY</div>
<div class="t lb c" style="left:937px">ASSEMBLE</div>
<div class="t lb c" style="left:1061px">CONSTRUCT</div>
<div class="t lb c" style="left:1181px">INSPECT</div>
<div class="t lb c" style="left:1304px">INSERT</div>
<div class="t lb c" style="left:1412px">SELECT</div>
<div class="t" style="left:36px;top:199px;font-size:12.5px;color:#666">BROWSER</div>
<div class="t" style="left:36px;top:940px;font-size:12.5px;color:#666">COMMENTS</div>
<div class="t tr" style="left:122px;top:234px;color:#fff;font-weight:bold;font-size:13.500px;letter-spacing:.4px">Body Assembly v51</div>
<div class="t tr" style="left:114px;top:264px">Document Settings</div>
<div class="t tr" style="left:114px;top:294px">Named Views</div>
<div class="t tr" style="left:145px;top:324px">Origin</div>
<div class="t tr" style="left:145px;top:354px">Sketches</div>
<div class="t tr" style="left:145px;top:384px">Construction</div>
<div class="t tr" style="left:145px;top:414px">3D printed parts:1</div>
<div class="t tr" style="left:145px;top:444px">non 3D printed parts:1</div>
</div></body></html>
